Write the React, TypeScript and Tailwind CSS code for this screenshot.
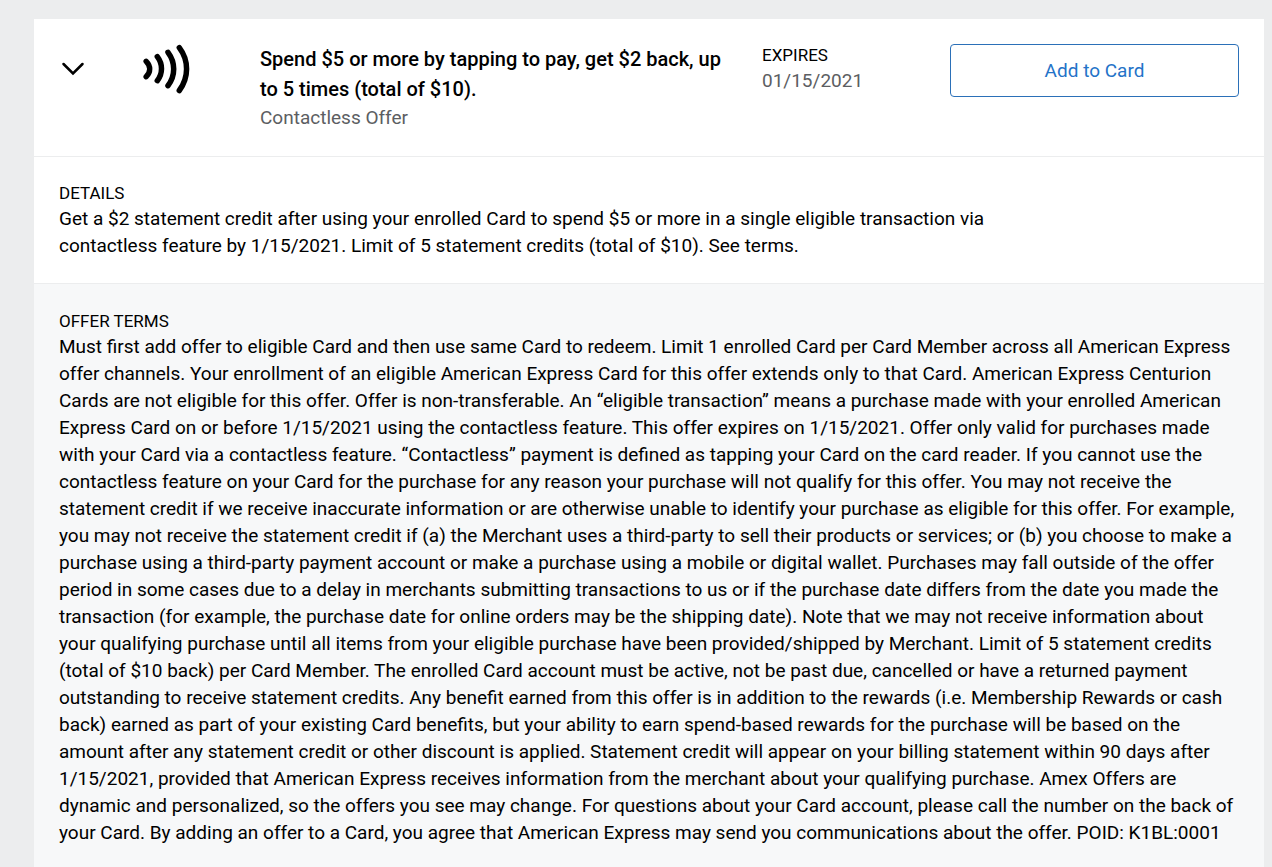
import { useState } from 'react';

const TERMS =
  'Must first add offer to eligible Card and then use same Card to redeem. Limit 1 enrolled Card per Card Member across all American Express offer channels. Your enrollment of an eligible American Express Card for this offer extends only to that Card. American Express Centurion Cards are not eligible for this offer. Offer is non-transferable. An “eligible transaction” means a purchase made with your enrolled American Express Card on or before 1/15/2021 using the contactless feature. This offer expires on 1/15/2021. Offer only valid for purchases made with your Card via a contactless feature. “Contactless” payment is defined as tapping your Card on the card reader. If you cannot use the contactless feature on your Card for the purchase for any reason your purchase will not qualify for this offer. You may not receive the statement credit if we receive inaccurate information or are otherwise unable to identify your purchase as eligible for this offer. For example, you may not receive the statement credit if (a) the Merchant uses a third-party to sell their products or services; or (b) you choose to make a purchase using a third-party payment account or make a purchase using a mobile or digital wallet. Purchases may fall outside of the offer period in some cases due to a delay in merchants submitting transactions to us or if the purchase date differs from the date you made the transaction (for example, the purchase date for online orders may be the shipping date). Note that we may not receive information about your qualifying purchase until all items from your eligible purchase have been provided/shipped by Merchant. Limit of 5 statement credits (total of $10 back) per Card Member. The enrolled Card account must be active, not be past due, cancelled or have a returned payment outstanding to receive statement credits. Any benefit earned from this offer is in addition to the rewards (i.e. Membership Rewards or cash back) earned as part of your existing Card benefits, but your ability to earn spend-based rewards for the purchase will be based on the amount after any statement credit or other discount is applied. Statement credit will appear on your billing statement within 90 days after 1/15/2021, provided that American Express receives information from the merchant about your qualifying purchase. Amex Offers are dynamic and personalized, so the offers you see may change. For questions about your Card account, please call the number on the back of your Card. By adding an offer to a Card, you agree that American Express may send you communications about the offer. POID: K1BL:0001';

const ContactlessIcon = () => (
  <svg
    className="h-[50px] w-12 shrink-0"
    viewBox="0 0 48 50"
    fill="none"
    stroke="currentColor"
    strokeWidth="5.5"
    strokeLinecap="round"
    aria-hidden="true"
  >
    <path d="M3.2 17.3C7.8 22 7.8 28 3.2 32.7" />
    <path d="M14.3 12.7C19.9 20 19.9 29.5 14.3 36.7" />
    <path d="M25 8.3C32.6 18.5 32.6 31.5 25 41.7" />
    <path d="M36.3 3.7C46 16.5 46 33.5 36.3 46.5" />
  </svg>
);

const OfferDetails = () => (
  <>
    <section className="border-t border-[#ecedee] px-[25px] pt-[25px] pb-6">
      <h3 className="text-[17px] leading-[23px]">DETAILS</h3>
      <p className="max-w-[940px] text-[19px] leading-[27px]">
        Get a $2 statement credit after using your enrolled Card to spend $5 or more in a single
        eligible transaction via contactless feature by 1/15/2021. Limit of 5 statement credits
        (total of $10). See terms.
      </p>
    </section>
    <section className="border-t border-[#ecedee] bg-[#f7f8f9] px-[25px] pt-[26px] pb-6">
      <h3 className="text-[17px] leading-[23px]">OFFER TERMS</h3>
      <p className="text-[19px] leading-[27px]">{TERMS}</p>
    </section>
  </>
);

const App = () => {
  const [isOpen, setIsOpen] = useState(true);
  const [isAdded, setIsAdded] = useState(false);

  return (
    <main className="min-h-screen bg-[#ecedee] pt-[19px] pr-2 pl-[34px] font-['Roboto',sans-serif] text-black">
      <article className="bg-white">
        <header className="flex items-start px-[25px] pt-[25px] pb-[25px]">
          <button
            type="button"
            className="mt-[11px] mr-[56px] flex h-7 w-7 shrink-0 items-center justify-center"
            aria-label="Toggle offer details"
            aria-expanded={isOpen}
            onClick={() => setIsOpen(!isOpen)}
          >
            <svg
              className={isOpen ? 'h-6 w-6' : 'h-6 w-6 -rotate-90'}
              viewBox="0 0 24 24"
              fill="none"
              stroke="currentColor"
              strokeWidth="2.5"
              strokeLinecap="round"
              aria-hidden="true"
            >
              <path d="M2.5 7L12 16.5L21.5 7" />
            </svg>
          </button>
          <ContactlessIcon />
          <div className="ml-[69px] w-[478px] shrink-0">
            <h2 className="text-xl leading-[30px] font-medium">
              Spend $5 or more by tapping to pay, get $2 back, up to 5 times (total of $10).
            </h2>
            <p className="text-[19px] leading-[27px] text-[#5c5e62]">Contactless Offer</p>
          </div>
          <dl className="ml-6 w-[188px] shrink-0">
            <dt className="text-[17px] leading-[23px]">EXPIRES</dt>
            <dd className="text-[19px] leading-[27px] text-[#5c5e62]">01/15/2021</dd>
          </dl>
          <button
            type="button"
            className="h-[53px] flex-1 rounded border border-[#2b70b8] pt-0.5 text-[19px] text-[#2473c8]"
            onClick={() => setIsAdded(!isAdded)}
          >
            {isAdded ? 'Added to Card' : 'Add to Card'}
          </button>
        </header>
        {isOpen && <OfferDetails />}
      </article>
    </main>
  );
};

export default App;
